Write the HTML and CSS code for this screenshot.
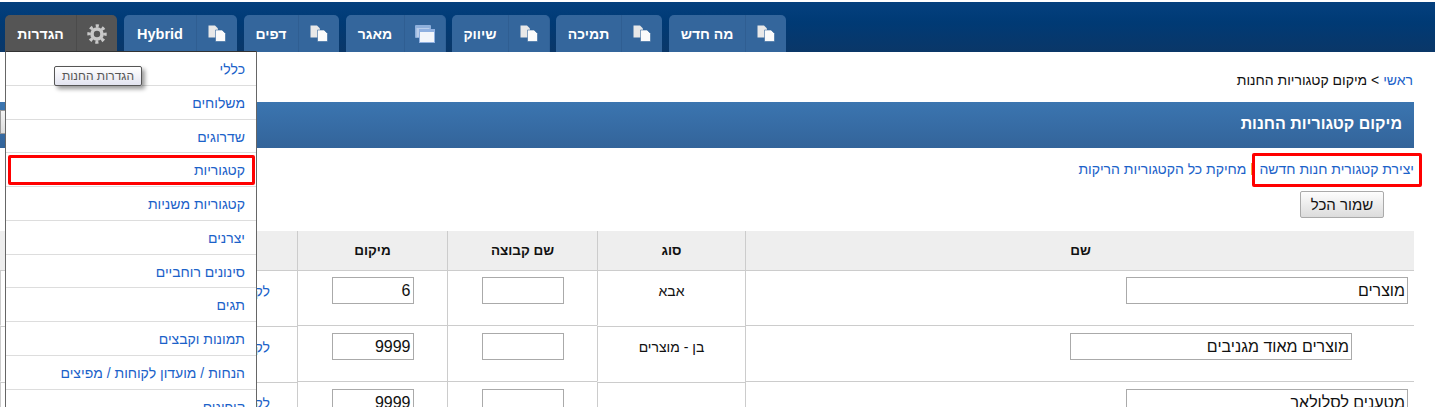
FILE: index.html
```html
<!DOCTYPE html>
<html lang="he" dir="rtl">
<head>
 <meta charset="UTF-8">
 <meta name="viewport" content="width=device-width,initial-scale=1.0">
 <title>מיקום קטגוריות החנות</title>
 <link rel="stylesheet" href="styles.css">
</head>
<body>
<svg class="defs" width="0" height="0" aria-hidden="true">
 <symbol id="ico_copy" viewBox="0 0 18 17">
  <path d="M0.5 0.5H7L10 3.5V12.5H0.5Z" fill="#e8e8e8"/>
  <path d="M7.5 5H14L17.5 8.5V16.5H7.5Z" fill="#fbfbfb" stroke="#34669c" stroke-width="0.6"/>
 </symbol>
</svg>
<nav class="topbar">
 <div class="tab tab_settings">
  <span class="tab_text">הגדרות</span>
  <span class="tab_icon">
   <svg width="20" height="20" viewBox="0 0 20 20">
    <circle cx="10" cy="10" r="8" fill="none" stroke="#c8c8c8" stroke-width="3.4" stroke-dasharray="3.1 3.18" stroke-dashoffset="1.5"/>
    <circle cx="10" cy="10" r="5" fill="none" stroke="#c8c8c8" stroke-width="3.6"/>
   </svg>
  </span>
 </div>
 <div class="tab tab_hybrid">
  <span class="tab_text tab_latin">Hybrid</span>
  <span class="tab_icon"><svg width="18" height="17"><use href="#ico_copy"/></svg></span>
 </div>
 <div class="tab tab_pages">
  <span class="tab_text">דפים</span>
  <span class="tab_icon"><svg width="18" height="17"><use href="#ico_copy"/></svg></span>
 </div>
 <div class="tab tab_store tab_edge">
  <span class="tab_text">מאגר</span>
  <span class="tab_icon">
   <svg width="20" height="18" viewBox="0 0 20 18">
    <rect x="0" y="0" width="16" height="13" rx="1" fill="#8fb0dc"/>
    <rect x="1.5" y="3" width="13" height="9" fill="#b9cdea"/>
    <rect x="4" y="4" width="16" height="14" fill="#8fb0e0"/>
    <rect x="5" y="7" width="14" height="10" fill="#f3f6fb"/>
   </svg>
  </span>
 </div>
 <div class="tab tab_market tab_edge">
  <span class="tab_text">שיווק</span>
  <span class="tab_icon"><svg width="18" height="17"><use href="#ico_copy"/></svg></span>
 </div>
 <div class="tab tab_support">
  <span class="tab_text">תמיכה</span>
  <span class="tab_icon"><svg width="18" height="17"><use href="#ico_copy"/></svg></span>
 </div>
 <div class="tab tab_news">
  <span class="tab_text">מה חדש</span>
  <span class="tab_icon"><svg width="18" height="17"><use href="#ico_copy"/></svg></span>
 </div>
</nav>

<ul class="menu">
 <li><a href="#">כללי</a></li>
 <li><a href="#">משלוחים</a></li>
 <li><a href="#">שדרוגים</a></li>
 <li class="menu_marked"><a href="#">קטגוריות</a></li>
 <li><a href="#">קטגוריות משניות</a></li>
 <li><a href="#">יצרנים</a></li>
 <li><a href="#">סינונים רוחביים</a></li>
 <li><a href="#">תגים</a></li>
 <li><a href="#">תמונות וקבצים</a></li>
 <li><a href="#">הנחות / מועדון לקוחות / מפיצים</a></li>
 <li><a href="#">קופונים</a></li>
</ul>
<div class="tooltip">הגדרות החנות</div>

<main class="content">
 <div class="breadcrumb"><a href="#">ראשי</a> &gt; מיקום קטגוריות החנות</div>
 <div class="title_bar">
  <h1>מיקום קטגוריות החנות</h1>
  <span class="title_tool"></span>
 </div>
 <div class="actions">
  <a class="marked_link" href="#">יצירת קטגורית חנות חדשה</a>
  <span class="sep"></span>
  <a href="#">מחיקת כל הקטגוריות הריקות</a>
 </div>
 <div class="save_row"><button type="button">שמור הכל</button></div>
 <table class="cats">
  <colgroup>
   <col class="col_name"><col class="col_type"><col class="col_group"><col class="col_pos"><col class="col_link">
  </colgroup>
  <thead>
   <tr><th>שם</th><th>סוג</th><th>שם קבוצה</th><th>מיקום</th><th></th></tr>
  </thead>
  <tbody>
   <tr class="row_first">
    <td><input class="inp_name" type="text" value="מוצרים"></td>
    <td class="low"><div class="cell_text">אבא</div></td>
    <td class="mid"><input class="inp_small" type="text"></td>
    <td class="mid"><input class="inp_small" type="text" value="6"></td>
    <td class="low cell_link"><div class="cell_text"><a href="#">לקטגוריה</a></div></td>
   </tr>
   <tr>
    <td><input class="inp_name inp_child" type="text" value="מוצרים מאוד מגניבים"></td>
    <td class="low"><div class="cell_text">בן - מוצרים</div></td>
    <td class="mid"><input class="inp_small" type="text"></td>
    <td class="mid"><input class="inp_small" type="text" value="9999"></td>
    <td class="low cell_link"><div class="cell_text"><a href="#">לקטגוריה</a></div></td>
   </tr>
   <tr>
    <td><input class="inp_name" type="text" value="מטענים לסלולאר"></td>
    <td class="low"></td>
    <td class="mid"><input class="inp_small" type="text"></td>
    <td class="mid"><input class="inp_small" type="text" value="9999"></td>
    <td class="low cell_link"><div class="cell_text"><a href="#">לקטגוריה</a></div></td>
   </tr>
  </tbody>
 </table>
</main>
</body>
</html>
```
FILE: styles.css
```css
html, body{
  margin: 0;
  height: 407px;
  overflow: hidden;
  background: #fff;
}
body{
  position: relative;
  font-family: "Liberation Sans", Arial, sans-serif;
  font-size: 14px;
  line-height: 16px;
  color: #111;
}
a{
  color: #1b62c9;
  text-decoration: none;
}
.defs{
  position: absolute;
}

/* top navigation */
.topbar{
  direction: ltr;
  display: flex;
  align-items: stretch;
  gap: 7px;
  height: 37px;
  margin-top: 2px;
  padding: 13px 0 0 5px;
  background: linear-gradient(#04407e, #003a75 40%, #0a3768);
}
.tab{
  display: flex;
  box-sizing: border-box;
  background: #34669c;
  border-radius: 5px 5px 0 0;
  color: #fff;
  font-weight: bold;
  font-size: 14px;
}
.tab_settings{ width: 112px; }
.tab_hybrid{ width: 113px; }
.tab_pages{ width: 95px; }
.tab_store{ width: 99px; }
.tab_market{ width: 97px; }
.tab_support{ width: 106px; }
.tab_news{ width: 117px; }
.tab_text{
  flex: 1;
  direction: rtl;
  display: flex;
  align-items: center;
  justify-content: center;
}
.tab_latin{
  font-size: 14.5px;
}
.tab_icon{
  display: flex;
  align-items: center;
  justify-content: center;
  width: 40px;
  border-left: 1px solid #2f5e92;
}
.tab_settings{
  background: #555;
}
.tab_settings .tab_icon{
  border-left-color: #4b4b4b;
}
.tab_edge{
  box-shadow: 1px 0 0 #2f6096;
}

/* dropdown under the settings tab */
.menu{
  position: absolute;
  top: 51px;
  left: 5px;
  width: 250px;
  margin: 0;
  padding: 0;
  list-style: none;
  background: #fff;
  border: 1px solid #666;
  border-top-color: #333;
  z-index: 5;
}
.menu li{
  position: relative;
  box-sizing: border-box;
  height: 33.75px;
  padding: 9px 11px 0 0;
  border-bottom: 1px solid #ddd;
}
.menu_marked::after{
  content: "";
  position: absolute;
  top: 2px;
  left: 2px;
  right: 1px;
  bottom: 1px;
  border: 3px solid #f00;
  border-radius: 2px;
}
.tooltip{
  position: absolute;
  top: 66px;
  left: 54px;
  box-sizing: border-box;
  width: 88px;
  height: 20px;
  text-align: center;
  font-size: 12px;
  line-height: 18px;
  color: #555;
  background: linear-gradient(#fff, #e3e4f0);
  border: 1px solid #555;
  border-radius: 2px;
  box-shadow: 3px 3px 4px rgba(0,0,0,0.4);
  z-index: 6;
}

/* page content */
.content{
  padding-right: 21px;
}
.breadcrumb{
  margin-top: 20px;
  padding-right: 1px;
  color: #111;
}
.title_bar{
  display: flex;
  justify-content: space-between;
  align-items: flex-start;
  height: 46px;
  margin-top: 14px;
  padding-right: 12px;
  background: linear-gradient(#3b75b0, #33649a);
}
h1{
  margin: 14px 0 0;
  font-size: 16px;
  color: #fff;
}
.title_tool{
  width: 90px;
  height: 22px;
  margin-top: 8px;
  background: linear-gradient(#f4f4f4, #ddd);
  border: 1px solid #999;
}
.actions{
  display: flex;
  align-items: center;
  margin-top: 13px;
}
.marked_link{
  position: relative;
}
.marked_link::after{
  content: "";
  position: absolute;
  top: -8px;
  left: -7px;
  right: -8px;
  bottom: -10px;
  border: 3px solid #f00;
  border-radius: 2px;
}
.sep{
  width: 1px;
  height: 12px;
  margin: 0 7px 0 5px;
  background: #f0a63c;
}
.save_row{
  margin-top: 14px;
  padding-right: 30px;
}
button{
  display: block;
  box-sizing: border-box;
  width: 84px;
  height: 27px;
  padding: 0;
  font-family: inherit;
  font-size: 15px;
  color: #111;
  background: linear-gradient(#fdfdfd, #dcdcdc);
  border: 1px solid #aaa;
  border-radius: 2px;
}

/* categories table */
.cats{
  table-layout: fixed;
  width: 1414px;
  margin-top: 13px;
  border-collapse: separate;
  border-spacing: 0;
}
.col_name{ width: 669px; }
.col_type{ width: 148px; }
.col_group{ width: 150px; }
.col_pos{ width: 150px; }
.col_link{ width: 297px; }
th{
  box-sizing: border-box;
  height: 40px;
  padding: 0;
  font-size: 13.5px;
  background: #eee;
  border-bottom: 1px solid #ccc;
  border-left: 1px solid #ccc;
}
th:first-child{
  padding-left: 1px;
}
th:last-child{
  border-left: 0;
}
td{
  box-sizing: border-box;
  height: 56px;
  padding: 7px 0 0;
  vertical-align: top;
  text-align: center;
  border-bottom: 1px solid #ccc;
  border-left: 1px solid #ccc;
}
.row_first td{
  height: 55px;
  padding-top: 6px;
}
td:first-child{
  padding-right: 6px;
  text-align: right;
}
td.low{
  border-bottom-color: transparent;
  box-shadow: 0 1px 0 #ccc;
}
.cell_text{
  padding-top: 6px;
}
.cell_link{
  text-align: right;
  padding-right: 27px;
}
input{
  box-sizing: border-box;
  height: 27px;
  padding: 0 2px;
  font-family: inherit;
  font-size: 16px;
  color: #111;
  background: #fff;
  border: 1px solid #aaa;
  border-radius: 0;
  outline: 0;
}
.inp_name{
  width: 282px;
}
.inp_child{
  margin-right: 56px;
}
.inp_small{
  display: block;
  width: 82px;
  margin: 0 auto;
}
```
